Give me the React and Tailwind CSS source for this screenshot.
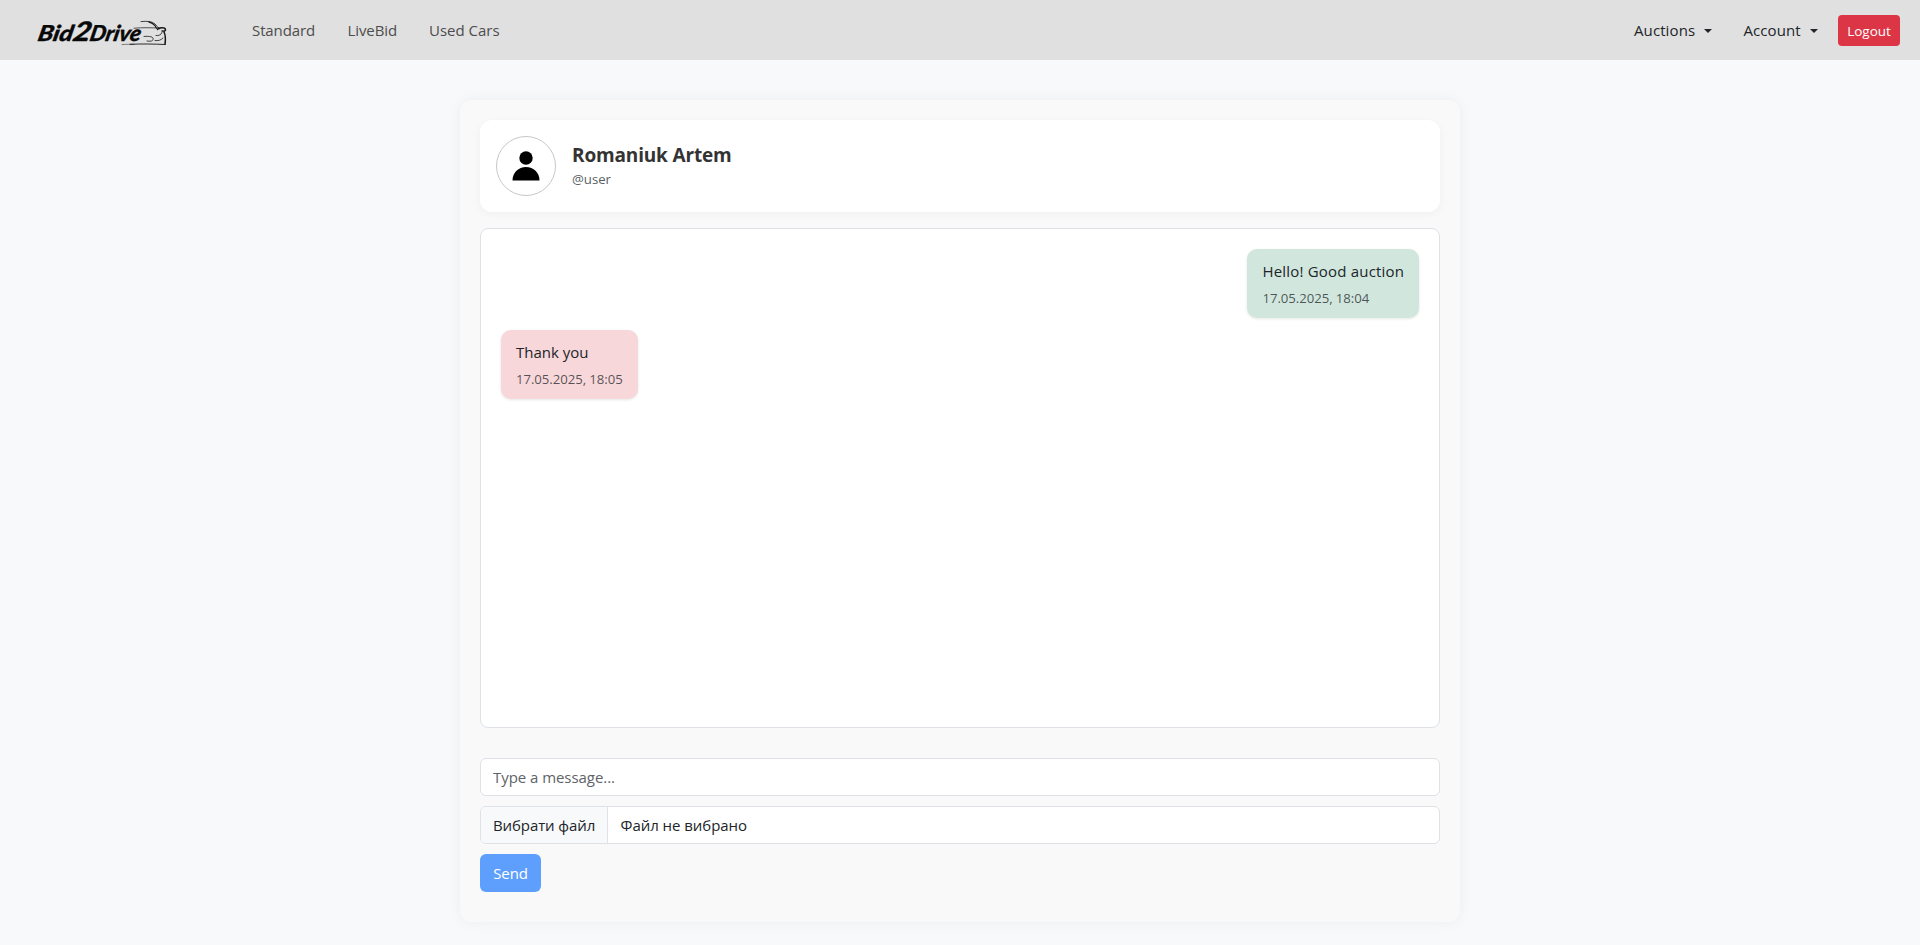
function Logo() {
  return (
    <svg width="140" height="36" viewBox="0 0 140 36" role="img" aria-label="Bid2Drive">
      <g fontFamily="Lato, sans-serif" fontWeight="900" fontStyle="italic" fill="#090909" stroke="#090909" strokeWidth="0.3" transform="skewX(-12)">
        <text x="13" y="29" fontSize="22" textLength="35" lengthAdjust="spacingAndGlyphs">Bid</text>
        <text x="48" y="29" fontSize="27" textLength="18" lengthAdjust="spacingAndGlyphs">2</text>
        <text x="65" y="29" fontSize="22" textLength="51" lengthAdjust="spacingAndGlyphs">Drive</text>
      </g>
      <g fill="none" stroke="#161616" strokeLinecap="round">
        <path strokeWidth="0.800" d="M111 9.600c6-.7 11-.3 14 2.400 2 1.700 3 3.500 4 5" />
        <path strokeWidth="1.200" d="M119 10.200c3.500.8 6 3 7.500 6" />
        <path strokeWidth="0.700" d="M104 16.200c9-.8 17-.4 25-.2" />
        <path strokeWidth="1.400" d="M127.500 17.500c1-2 7.500-2.500 8 0 .3 1.700-2 1.800-3.500 1.500" />
        <path strokeWidth="1.500" d="M134 20c1.500 3 1.600 8 1 12.300" />
        <path strokeWidth="0.900" d="M100 32.300c12-.6 24-.3 35 .2" />
        <path strokeWidth="0.500" d="M92 32.600c5-.4 8-.3 12-.3" />
        <path strokeWidth="0.800" d="M114 24.500c3-.4 5-.2 7 .3 3 .7 2.500 3.700.5 4.200-1.500.4-3 .2-4.500 0M132 20.500c-.8 2.500-3.500 3.400-6 3M133 26c-2 2.500-5 2.800-8 2.600" />
      </g>
    </svg>
  );
}

function Caret() {
  return <span className="ml-[9px] mt-px h-0 w-0 border-x-[4.5px] border-t-[4.5px] border-x-transparent border-t-[#212529]" />;
}

function Message({ text, time, mine }) {
  return (
    <div
      className={
        mine
          ? "h-[69px] w-[172px] self-end rounded-[10px] bg-[#d1e7dd] px-[15.5px] pt-[10px] shadow-[0_1px_3px_rgba(0,0,0,0.1)]"
          : "h-[69px] w-[137px] self-start rounded-[10px] bg-[#f8d7da] px-[15px] pt-[10px] shadow-[0_1px_3px_rgba(0,0,0,0.1)]"
      }
    >
      <div className={mine ? "leading-6 tracking-[0.190px]" : "leading-6 tracking-normal"}>{text}</div>
      <div className="mt-[5px] text-[13.200px] leading-[21px] tracking-[-0.060px] text-[#212529]/75">{time}</div>
    </div>
  );
}

export default function App() {
  return (
    <div className="min-h-[945px] whitespace-nowrap bg-[#f8f9fb] font-['Open_Sans','Noto_Sans',sans-serif] text-[15px] leading-6 tracking-[-0.100px] text-[#212529]">
      <nav className="flex h-[60px] items-center bg-[#e0e0e0] pl-[30px] pr-5">
        <div className="w-[222px]">
          <Logo />
        </div>
        <div className="flex text-[#4d4d4d]">
          <a className="w-[95.500px]">Standard</a>
          <a className="w-[81.500px]">LiveBid</a>
          <a className="tracking-normal">Used Cars</a>
        </div>
        <div className="ml-auto flex items-center">
          <a className="flex w-[109.500px] items-center">
            <span className="w-[61px] tracking-[0.100px]">Auctions</span>
            <Caret />
          </a>
          <a className="flex w-[94.500px] items-center">
            <span className="w-[57.500px] tracking-[0.080px]">Account</span>
            <Caret />
          </a>
          <button className="mt-px h-[31px] w-[62px] rounded bg-[#dc3545] text-[13.500px] tracking-normal text-white">Logout</button>
        </div>
      </nav>

      <main className="mx-auto mt-10 flex h-[822px] w-[1000px] flex-col rounded-xl bg-[#f9f9f9] p-5 shadow-[0_0_15px_rgba(0,0,0,0.05)]">
        <header className="flex h-[92px] items-center rounded-xl bg-white px-4 shadow-[0_2px_10px_rgba(0,0,0,0.04)]">
          <div className="flex h-[60px] w-[60px] items-center justify-center rounded-full border border-[#c8c8c8]">
            <svg width="28" height="32" viewBox="0 0 28 32">
              <circle cx="14" cy="8" r="6.700" />
              <path d="M.5 30.500C.5 22.500 6.500 17 14 17s13.500 5.500 13.500 13.500z" />
            </svg>
          </div>
          <div className="ml-4">
            <h1 className="mt-px text-[19px] font-bold leading-6 tracking-[-0.160px] text-[#333]">Romaniuk Artem</h1>
            <p className="mt-[2px] text-[13.200px] leading-[21px] tracking-normal text-[#5a5f64]">@user</p>
          </div>
        </header>

        <section className="mt-4 flex h-[500px] flex-col gap-3 rounded-lg border border-[#dee2e6] bg-white p-5">
          <Message mine text="Hello! Good auction" time="17.05.2025, 18:04" />
          <Message text="Thank you" time="17.05.2025, 18:05" />
        </section>

        <form className="mt-[30px] flex flex-col items-start gap-[10px]">
          <input
            className="h-[38px] w-full rounded-md border border-[#dee2e6] bg-white px-3 tracking-[-0.050px] outline-none placeholder:text-[#5e6368]"
            placeholder="Type a message..."
          />
          <div className="flex h-[38px] w-full overflow-hidden rounded-md border border-[#dee2e6] bg-white leading-9">
            <span className="w-[127px] border-r border-[#dee2e6] bg-[#f8f9fa] pl-3">Вибрати файл</span>
            <span className="pl-[12.500px] tracking-[-0.050px]">Файл не вибрано</span>
          </div>
          <button type="button" className="h-[38px] w-[61px] rounded-md bg-[#5e9ffe] text-white">
            Send
          </button>
        </form>
      </main>
    </div>
  );
}
